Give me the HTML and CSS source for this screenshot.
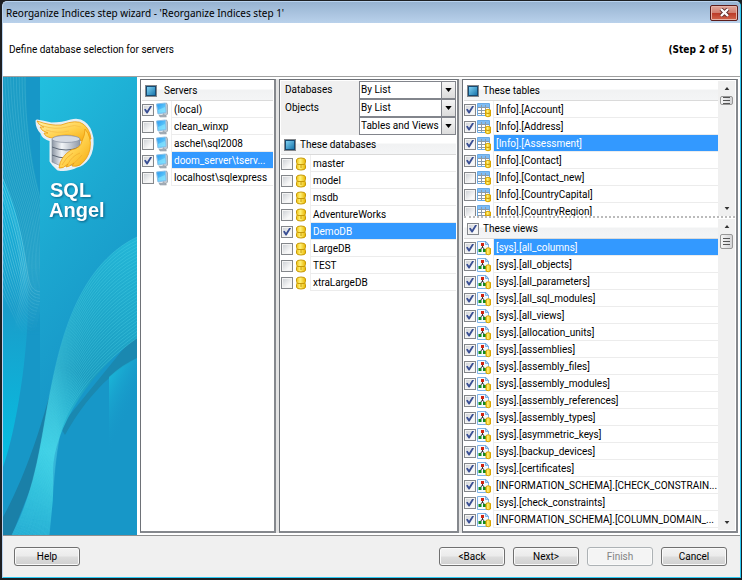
FILE: index.html
```html
<!DOCTYPE html>
<html lang="en">
<head>
<meta charset="utf-8">
<title>Reorganize Indices step wizard</title>
<link rel="stylesheet" href="styles.css">
</head>
<body>
<svg class="defs" aria-hidden="true">
  <defs>
    <linearGradient id="g-screen" x1="0" y1="0" x2="1" y2="1"><stop offset="0" stop-color="#2497f0"/><stop offset="1" stop-color="#7fe2ff"/></linearGradient>
    <linearGradient id="g-gold" x1="0" x2="1"><stop offset="0" stop-color="#f0c010"/><stop offset=".4" stop-color="#fff27a"/><stop offset="1" stop-color="#e8b400"/></linearGradient>
    <symbol id="i-server" viewBox="0 0 15 16">
      <path d="M9 2l2.500-1 1 2v9l-2 2H8z" fill="#c3c9cf" stroke="#8b969f" stroke-width=".7"/>
      <path d="M4 13h6l1.500 2H5z" fill="#aab3bc" stroke="#87929d" stroke-width=".5"/>
      <path d="M1.500 2l9-1 .5 9.500-8 1.500z" fill="url(#g-screen)" stroke="#8bc0e8"/>
      <path d="M3 8l7-3 .3 4.800L3.600 11z" fill="#8ce8ff" opacity=".6"/>
    </symbol>
    <symbol id="i-db" viewBox="0 0 15 16">
      <path d="M2.500 4q0-2 4.500-2t4.500 2v2.500l-.7 1.500.7 1.500V12q0 2-4.500 2t-4.500-2V9.500L3.200 8l-.7-1.500z" fill="url(#g-gold)" stroke="#c89a08"/>
      <path d="M3.500 8.500h7M7 9v3" fill="none" stroke="#c89a08"/>
    </symbol>
    <symbol id="i-table" viewBox="0 0 15 16">
      <path d="M.5 1.500h12v12H.5z" fill="#fff" stroke="#6aaae4"/>
      <path d="M1 2h11v3H1z" fill="#7dbcf5"/>
      <path d="M1 5.500h11M1 8.500h11M1 11.500h11M4.500 3v10M8.500 3v10" stroke="#8d9aa6" fill="none"/>
      <path d="M8.500 8q2.500-1.500 5 0v6q-2.500 1.500-5 0z" fill="url(#g-gold)" stroke="#d8a400"/>
      <path d="M9 11q2 1 4 0" stroke="#c79400" fill="none"/>
    </symbol>
    <symbol id="i-view" viewBox="0 0 15 16">
      <path d="M.5 1.500h8.500l2.500 3v10H.5z" fill="#f4faff" stroke="#7fb3e6"/>
      <path d="M8.500 1.500v3h3z" fill="#b9dcf8" stroke="#5b9bd8" stroke-width=".7"/>
      <path d="M5.500 5v3M3 10l2.500-3L8 10" stroke="#333" fill="none"/>
      <path d="M4 3h3v3H4z" fill="#d02410"/>
      <path d="M1.500 9h3v3h-3zM6 9h3v3H6z" fill="#128a22"/>
      <path d="M9 8.500q2.200-1.500 4.500 0v5.500q-2.300 1.500-4.500 0z" fill="url(#g-gold)" stroke="#d8a400"/>
    </symbol>
    <symbol id="i-down" viewBox="0 0 8 5"><path d="M0 0h8L4 5z" fill="currentColor"/></symbol>
    <symbol id="i-up" viewBox="0 0 8 5"><path d="M0 5h8L4 0z" fill="currentColor"/></symbol>
  </defs>
</svg>
<div class="window">
  <header class="titlebar">
    <h1>Reorganize Indices step wizard - 'Reorganize Indices step 1'</h1>
    <button class="close" type="button" aria-label="Close"><svg viewBox="0 0 11 9" width="11" height="9"><path d="M2 1l7 7M9 1L2 8" stroke="#5b2a28" stroke-width="4"/><path d="M2 1l7 7M9 1L2 8" stroke="#fff" stroke-width="2.400"/></svg></button>
  </header>
  <section class="intro">
    <p>Define database selection for servers</p>
    <strong>(Step 2 of 5)</strong>
  </section>
  <main class="content">
    <div class="banner">
      <svg viewBox="0 0 134 458" preserveAspectRatio="xMidYMin slice" role="img" aria-label="SQL Angel">
        <defs>
          <linearGradient id="b-main" x1="0" y1="0" x2=".35" y2="1"><stop offset="0" stop-color="#23c5e2"/><stop offset=".45" stop-color="#1ca7d0"/><stop offset=".75" stop-color="#1797c8"/></linearGradient>
          <linearGradient id="b-crest" x1="0" y1="0" x2="0" y2="1"><stop offset="0" stop-color="#13b2da"/><stop offset=".45" stop-color="#1a9dca"/><stop offset="1" stop-color="#06bfe2"/></linearGradient>
          <linearGradient id="b-wave" gradientUnits="userSpaceOnUse" x1="134" y1="170" x2="20" y2="458"><stop offset="0" stop-color="#23b5d6"/><stop offset=".45" stop-color="#1b9bbf"/><stop offset=".72" stop-color="#30c9e2"/><stop offset=".85" stop-color="#22b6d6"/><stop offset="1" stop-color="#1aa3ce"/></linearGradient>
          <linearGradient id="b-glow" x1="0" y1="0" x2=".5" y2="1"><stop offset="0" stop-color="#1cc5e0"/><stop offset=".7" stop-color="#1797c8" stop-opacity="0"/></linearGradient>
          <linearGradient id="b-wing" x1="0" y1="0" x2="1" y2="1"><stop offset="0" stop-color="#fff3b0"/><stop offset=".55" stop-color="#ffd04a"/><stop offset="1" stop-color="#f5a80c"/></linearGradient>
          <linearGradient id="b-can" x1="0" x2="1"><stop offset="0" stop-color="#8b95a3"/><stop offset=".35" stop-color="#f2f5f8"/><stop offset="1" stop-color="#8f98a6"/></linearGradient>
          <linearGradient id="b-fade" gradientUnits="userSpaceOnUse" x1="0" y1="190" x2="0" y2="258"><stop offset="0" stop-color="#fff"/><stop offset="1" stop-color="#000"/></linearGradient>
          <mask id="b-leftmask" maskUnits="userSpaceOnUse" x="0" y="0" width="37" height="260"><path d="M0 0h37V260H0z" fill="url(#b-fade)"/></mask>
        </defs>
        <path d="M0 0h134v458H0z" fill="url(#b-main)"/>
        <path d="M0 0h37v458H0z" fill="#1797c7"/>
        <path d="M0 0h23Q22 60 37 118V260H0z" fill="#1c9dc6" mask="url(#b-leftmask)"/>
        <path d="M0 102C14 130 25 175 25 225S14 350 0 390z" fill="url(#b-crest)"/>
        <path d="M0 440C22 400 38 350 47 316L36 390 9 458H0z" fill="#1a80a8"/>
        <path d="M134 255v26C100 300 78 330 62 358L57 350z" fill="#1a88b0"/>
        <path d="M106 300Q120 287 134 281V370L106 390z" fill="url(#b-glow)"/>
        <path d="M9 458C34 410 38 360 47 316S72 190 134 160V261C90 292 50 350 50 395V423L46 458z" fill="url(#b-wave)"/>
        <g id="waves" fill="none"></g>
        <g id="ripples" fill="none" mask="url(#b-leftmask)"></g>
        <g stroke-linejoin="round">
          <path d="M34 44Q40 45 48 47Q60 47 68 44Q76 42 81 46Q87 50 89 61Q90 73 85 81Q80 88 74 89Q64 94 55 92L51 88L48 84V63Q40 61 39 56Q34 51 34 44z" fill="#f7fafc" stroke="#e6eff4" stroke-width="3"/>
          <path d="M34 44Q48 49 58 48Q74 42 80 47Q87 52 88 62L78 64Q74 58 63 58Q54 58 49 61Q42 60 41 56L45 56Q38 54 37 50L41 50Q35 48 34 44z" fill="url(#b-wing)" stroke="#eb9a0c" stroke-width=".8"/>
          <path d="M40 49Q52 53 64 50Q72 47 78 50M43 53Q54 57 66 54" fill="none" stroke="#f6bf48" stroke-width=".8"/>
          <path d="M49 62V85Q62 93 77 85V62z" fill="url(#b-can)" stroke="#7f8998" stroke-width=".6"/>
          <ellipse cx="63" cy="62" rx="14" ry="3.500" fill="#d5dae2" stroke="#8791a0" stroke-width=".7"/>
          <path d="M49 70Q63 76 77 70M49 78Q63 84 77 78" fill="none" stroke="#5d6877"/>
          <path d="M82 52Q89 60 87 72Q85 82 77 88Q73 90 69 89L71 86Q66 90 63 90L65 87Q60 92 56 91Q57 80 68 73Q78 71 79 64Q82 58 82 52z" fill="url(#b-wing)" stroke="#eb9a0c" stroke-width=".8"/>
          <path d="M65 87Q69 79 77 76M71 86Q75 83 79 78M59 88Q63 80 70 76" fill="none" stroke="#f1ae30" stroke-width=".8"/>
        </g>
        <g class="brand"><text x="47" y="120">SQL</text><text x="46" y="140">Angel</text></g>
      </svg>
    </div>
    <div class="panes">
      <section class="pane">
        <label class="head"><input type="checkbox" class="mixed"><span>Servers</span></label>
        <ul class="list">
          <li><label><input type="checkbox" checked><svg><use href="#i-server"/></svg><span>(local)</span></label></li>
          <li><label><input type="checkbox"><svg><use href="#i-server"/></svg><span>clean_winxp</span></label></li>
          <li><label><input type="checkbox"><svg><use href="#i-server"/></svg><span>aschel\sql2008</span></label></li>
          <li class="selected"><label><input type="checkbox" checked><svg><use href="#i-server"/></svg><span>doom_server\tserv...</span></label></li>
          <li><label><input type="checkbox"><svg><use href="#i-server"/></svg><span>localhost\sqlexpress</span></label></li>
        </ul>
      </section>
      <section class="pane">
        <div class="filters">
          <label for="f-db">Databases</label>
          <div class="combo"><select id="f-db"><option>By List</option></select><i><svg><use href="#i-down"/></svg></i></div>
          <label for="f-obj">Objects</label>
          <div class="combo"><select id="f-obj"><option>By List</option></select><i><svg><use href="#i-down"/></svg></i></div>
          <span></span>
          <div class="combo"><select aria-label="Object types"><option>Tables and Views</option></select><i><svg><use href="#i-down"/></svg></i></div>
        </div>
        <label class="head"><input type="checkbox" class="mixed"><span>These databases</span></label>
        <ul class="list">
          <li><label><input type="checkbox"><svg><use href="#i-db"/></svg><span>master</span></label></li>
          <li><label><input type="checkbox"><svg><use href="#i-db"/></svg><span>model</span></label></li>
          <li><label><input type="checkbox"><svg><use href="#i-db"/></svg><span>msdb</span></label></li>
          <li><label><input type="checkbox"><svg><use href="#i-db"/></svg><span>AdventureWorks</span></label></li>
          <li class="selected"><label><input type="checkbox" checked><svg><use href="#i-db"/></svg><span>DemoDB</span></label></li>
          <li><label><input type="checkbox"><svg><use href="#i-db"/></svg><span>LargeDB</span></label></li>
          <li><label><input type="checkbox"><svg><use href="#i-db"/></svg><span>TEST</span></label></li>
          <li><label><input type="checkbox"><svg><use href="#i-db"/></svg><span>xtraLargeDB</span></label></li>
        </ul>
      </section>
      <section class="pane objects">
        <div class="scroller tables">
          <div class="rows">
            <label class="head"><input type="checkbox" class="mixed"><span>These tables</span></label>
            <ul class="list">
              <li><label><input type="checkbox" checked><svg><use href="#i-table"/></svg><span>[Info].[Account]</span></label></li>
              <li><label><input type="checkbox" checked><svg><use href="#i-table"/></svg><span>[Info].[Address]</span></label></li>
              <li class="selected"><label><input type="checkbox" checked><svg><use href="#i-table"/></svg><span>[Info].[Assessment]</span></label></li>
              <li><label><input type="checkbox" checked><svg><use href="#i-table"/></svg><span>[Info].[Contact]</span></label></li>
              <li><label><input type="checkbox"><svg><use href="#i-table"/></svg><span>[Info].[Contact_new]</span></label></li>
              <li><label><input type="checkbox"><svg><use href="#i-table"/></svg><span>[Info].[CountryCapital]</span></label></li>
              <li><label><input type="checkbox"><svg><use href="#i-table"/></svg><span>[Info].[CountryRegion]</span></label></li>
            </ul>
          </div>
          <div class="bar"><button type="button" aria-label="Scroll up"><svg><use href="#i-up"/></svg></button><div class="thumb small"></div><button type="button" class="end" aria-label="Scroll down"><svg><use href="#i-down"/></svg></button></div>
        </div>
        <div class="scroller views">
          <div class="rows">
            <label class="head"><input type="checkbox" checked><span>These views</span></label>
            <ul class="list">
              <li class="selected"><label><input type="checkbox" checked><svg><use href="#i-view"/></svg><span>[sys].[all_columns]</span></label></li>
              <li><label><input type="checkbox" checked><svg><use href="#i-view"/></svg><span>[sys].[all_objects]</span></label></li>
              <li><label><input type="checkbox" checked><svg><use href="#i-view"/></svg><span>[sys].[all_parameters]</span></label></li>
              <li><label><input type="checkbox" checked><svg><use href="#i-view"/></svg><span>[sys].[all_sql_modules]</span></label></li>
              <li><label><input type="checkbox" checked><svg><use href="#i-view"/></svg><span>[sys].[all_views]</span></label></li>
              <li><label><input type="checkbox" checked><svg><use href="#i-view"/></svg><span>[sys].[allocation_units]</span></label></li>
              <li><label><input type="checkbox" checked><svg><use href="#i-view"/></svg><span>[sys].[assemblies]</span></label></li>
              <li><label><input type="checkbox" checked><svg><use href="#i-view"/></svg><span>[sys].[assembly_files]</span></label></li>
              <li><label><input type="checkbox" checked><svg><use href="#i-view"/></svg><span>[sys].[assembly_modules]</span></label></li>
              <li><label><input type="checkbox" checked><svg><use href="#i-view"/></svg><span>[sys].[assembly_references]</span></label></li>
              <li><label><input type="checkbox" checked><svg><use href="#i-view"/></svg><span>[sys].[assembly_types]</span></label></li>
              <li><label><input type="checkbox" checked><svg><use href="#i-view"/></svg><span>[sys].[asymmetric_keys]</span></label></li>
              <li><label><input type="checkbox" checked><svg><use href="#i-view"/></svg><span>[sys].[backup_devices]</span></label></li>
              <li><label><input type="checkbox" checked><svg><use href="#i-view"/></svg><span>[sys].[certificates]</span></label></li>
              <li><label><input type="checkbox" checked><svg><use href="#i-view"/></svg><span>[INFORMATION_SCHEMA].[CHECK_CONSTRAIN...</span></label></li>
              <li><label><input type="checkbox" checked><svg><use href="#i-view"/></svg><span>[sys].[check_constraints]</span></label></li>
              <li><label><input type="checkbox" checked><svg><use href="#i-view"/></svg><span>[INFORMATION_SCHEMA].[COLUMN_DOMAIN_...</span></label></li>
            </ul>
          </div>
          <div class="bar"><button type="button" aria-label="Scroll up"><svg><use href="#i-up"/></svg></button><div class="thumb"></div><button type="button" class="end" aria-label="Scroll down"><svg><use href="#i-down"/></svg></button></div>
        </div>
      </section>
    </div>
  </main>
  <footer class="footer">
    <button class="btn help" type="button">Help</button>
    <button class="btn" type="button">&lt;Back</button>
    <button class="btn" type="button">Next&gt;</button>
    <button class="btn" type="button" disabled>Finish</button>
    <button class="btn" type="button">Cancel</button>
  </footer>
</div>
<script src="banner.js"></script>
</body>
</html>
```
FILE: styles.css
```css
* { box-sizing: border-box; }
html { background: #1d1f22; }
body {
  margin: 0;
  min-height: 100vh;
  display: flex;
  font: 10px/14px Roboto, "Liberation Sans", sans-serif;
  color: #000;
}
button, select, input { font: inherit; color: inherit; margin: 0; padding: 0; }
.defs { position: absolute; width: 0; height: 0; }
.window {
  flex: 1;
  min-width: 0;
  display: flex;
  flex-direction: column;
  margin: 1px 1px 2px 2px;
  border: 1px solid #b9d3ef;
  border-right-color: #2cc8f2;
  border-bottom-color: #2cc8f2;
  border-radius: 5px 5px 0 0;
  overflow: hidden;
  background: #fff;
}
.titlebar {
  display: flex;
  align-items: center;
  height: 21px;
  padding: 0 2px 0 3px;
  background: linear-gradient(#97b3d1, #b9d1eb);
}
.titlebar h1 {
  flex: 1;
  margin: 0;
  font: 10px/14px "Noto Sans", sans-serif;
  white-space: nowrap;
}
.close {
  display: grid;
  place-items: center;
  width: 28px;
  height: 16px;
  border: 1px solid #5c1d1c;
  border-radius: 2px;
  background: linear-gradient(#e2a79b 0, #d17f70 48%, #bb3a28 52%, #d2674d);
  box-shadow: inset 0 0 0 1px #e6b3a8;
}
.intro {
  display: flex;
  justify-content: space-between;
  align-items: center;
  height: 54px;
  padding: 0 8px 0 6px;
  border-bottom: 1px solid #a0a0a0;
}
.intro p { margin: 0; }
.intro strong { font-family: "DejaVu Sans Condensed", sans-serif; }
.content { flex: 1; display: flex; min-height: 0; }
.banner { flex: 0 0 134px; display: flex; background: #1797c8; }
.banner svg { width: 100%; height: 100%; }
.brand text {
  font: bold 20px "Liberation Sans", sans-serif;
  fill: #fff;
  filter: drop-shadow(1px 1px 1px #0b5f85);
}
.panes {
  flex: 1;
  min-width: 0;
  display: grid;
  grid-template-columns: 136fr 180fr 276fr;
  gap: 3px;
  margin: 2px 2px 2px 3px;
  background: #e3e3e3;
}
.pane {
  min-width: 0;
  border: 1px solid #6e7278;
  border-right-width: 2px;
  border-right-color: #85888d;
  border-bottom-width: 2px;
  border-bottom-color: #85888d;
  padding: 1px;
  background: #fff;
  overflow: hidden;
}
.head {
  display: flex;
  align-items: center;
  gap: 4px;
  height: 20px;
  padding-left: 3px;
  border-bottom: 1px solid #dadada;
  background: linear-gradient(#fff 0, #fff 40%, #f1f2f3 50%, #f4f5f6);
  white-space: nowrap;
}
.pane:first-child .head { gap: 7px; }
.list { margin: 0; padding: 0; list-style: none; }
.list label {
  display: grid;
  grid-template-columns: 13px 16px 1fr;
  align-items: center;
  height: 17px;
}
.list svg { width: 15px; height: 16px; }
.list span {
  height: 17px;
  padding: 0 2px;
  border-left: 1px solid #eee;
  border-bottom: 1px solid #ececec;
  line-height: 17px;
  white-space: nowrap;
  overflow: hidden;
}
.selected span { background: #3399ff; color: #fff; }
input[type=checkbox] {
  appearance: none;
  display: grid;
  place-items: center;
  flex: none;
  width: 12px;
  height: 12px;
  border: 1px solid #84878b;
  background: linear-gradient(135deg, #c9cdd2, #f8f8f8 70%);
  box-shadow: inset 0 0 0 1px #f4f4f4;
}
input[type=checkbox]:checked::before {
  content: "";
  width: 8px;
  height: 8px;
  background: #3a4f94;
  clip-path: polygon(0 50%, 20% 40%, 38% 65%, 80% 0, 100% 8%, 45% 100%, 32% 100%);
}
input.mixed::before {
  content: "";
  width: 8px;
  height: 8px;
  border: 1px solid #174a72;
  background: linear-gradient(135deg, #7fd0f2, #1977ad);
}
.filters {
  display: grid;
  grid-template-columns: 1fr 97px;
  align-items: center;
  height: 54px;
  padding-left: 4px;
  background: #f0f0f0;
}
.combo {
  position: relative;
  height: 18px;
  border: 1px solid #82858c;
  background: #fff;
}
.combo select {
  appearance: none;
  display: block;
  width: 100%;
  height: 16px;
  padding-left: 1px;
  border: 0;
  background: transparent;
}
.combo i {
  position: absolute;
  top: 0;
  right: 0;
  display: grid;
  place-items: center;
  width: 14px;
  height: 16px;
  border-left: 1px solid #82858c;
  background: linear-gradient(#f5f5f5, #dcdcdc);
  pointer-events: none;
}
.combo svg { width: 7px; height: 4px; }
.objects { display: flex; flex-direction: column; }
.scroller { display: flex; overflow: hidden; }
.tables { flex: 0 0 137px; border-bottom: 2px dotted #bbb; }
.views { flex: 1; padding-top: 1px; }
.rows { flex: 1; min-width: 0; }
.bar {
  display: flex;
  flex-direction: column;
  align-items: center;
  width: 17px;
  background: #f0f0f0;
}
.bar button {
  display: grid;
  place-items: center;
  width: 15px;
  height: 15px;
  border: 0;
  background: none;
  color: #333;
}
.bar button svg { width: 6px; height: 3px; }
.bar .end { margin-top: auto; }
.thumb {
  display: grid;
  place-items: center;
  width: 13px;
  height: 15px;
  border: 1px solid #979797;
  border-radius: 2px;
  background: linear-gradient(90deg, #f5f5f5, #d4d4d6);
}
.thumb::before {
  content: "";
  width: 7px;
  height: 7px;
  background: repeating-linear-gradient(#555 0, #555 1px, transparent 1px, transparent 3px);
}
.thumb.small { height: 9px; }
.footer {
  display: flex;
  align-items: center;
  gap: 8px;
  height: 42px;
  padding: 0 13px 0 11px;
  border-top: 1px solid #8f8f8f;
  background: #f0f0f0;
}
.btn {
  width: 66px;
  height: 19px;
  border: 1px solid #707070;
  border-radius: 3px;
  background: linear-gradient(#f3f3f3 0, #ebebeb 48%, #dddddd 52%, #cfcfcf);
  box-shadow: inset 0 0 0 1px #fafafa;
}
.btn:disabled { border-color: #adb2b5; background: #f4f4f4; color: #838383; }
.help { margin-right: auto; }
```
FILE: banner.js
```js
// Fills the space between two cubic curves with evenly spaced hairlines.
function ribbon(target, from, to, count, colour, opacity) {
  const group = document.getElementById(target);
  for (let i = 0; i <= count; i++) {
    const t = i / count;
    const p = from.map((v, k) => (v + (to[k] - v) * t).toFixed(1));
    const path = document.createElementNS("http://www.w3.org/2000/svg", "path");
    path.setAttribute("d", `M${p[0]} ${p[1]}C${p.slice(2, 8).join(" ")}S${p.slice(8).join(" ")}`);
    path.setAttribute("stroke", colour);
    path.setAttribute("stroke-opacity", opacity);
    path.setAttribute("stroke-width", "0.7");
    group.appendChild(path);
  }
}

ribbon("waves", [9, 458, 34, 410, 38, 360, 47, 316, 72, 190, 134, 160],
       [46, 458, 50, 423, 50, 395, 56, 362, 90, 292, 134, 261], 30, "#5fe0ee", 0.4);
ribbon("ripples", [-30, 0, -26, 40, -12, 90, 4, 130, 22, 210, 10, 260],
       [22, 0, 22, 50, 28, 90, 36, 118, 46, 210, 30, 260], 18, "#8fdcec", 0.28);
ribbon("ripples", [0, 102, 10, 125, 18, 155, 22, 180, 26, 215, 40, 215],
       [-22, 130, -14, 170, -6, 205, 4, 225, 16, 255, 26, 260], 14, "#b8f0f6", 0.4);
```
